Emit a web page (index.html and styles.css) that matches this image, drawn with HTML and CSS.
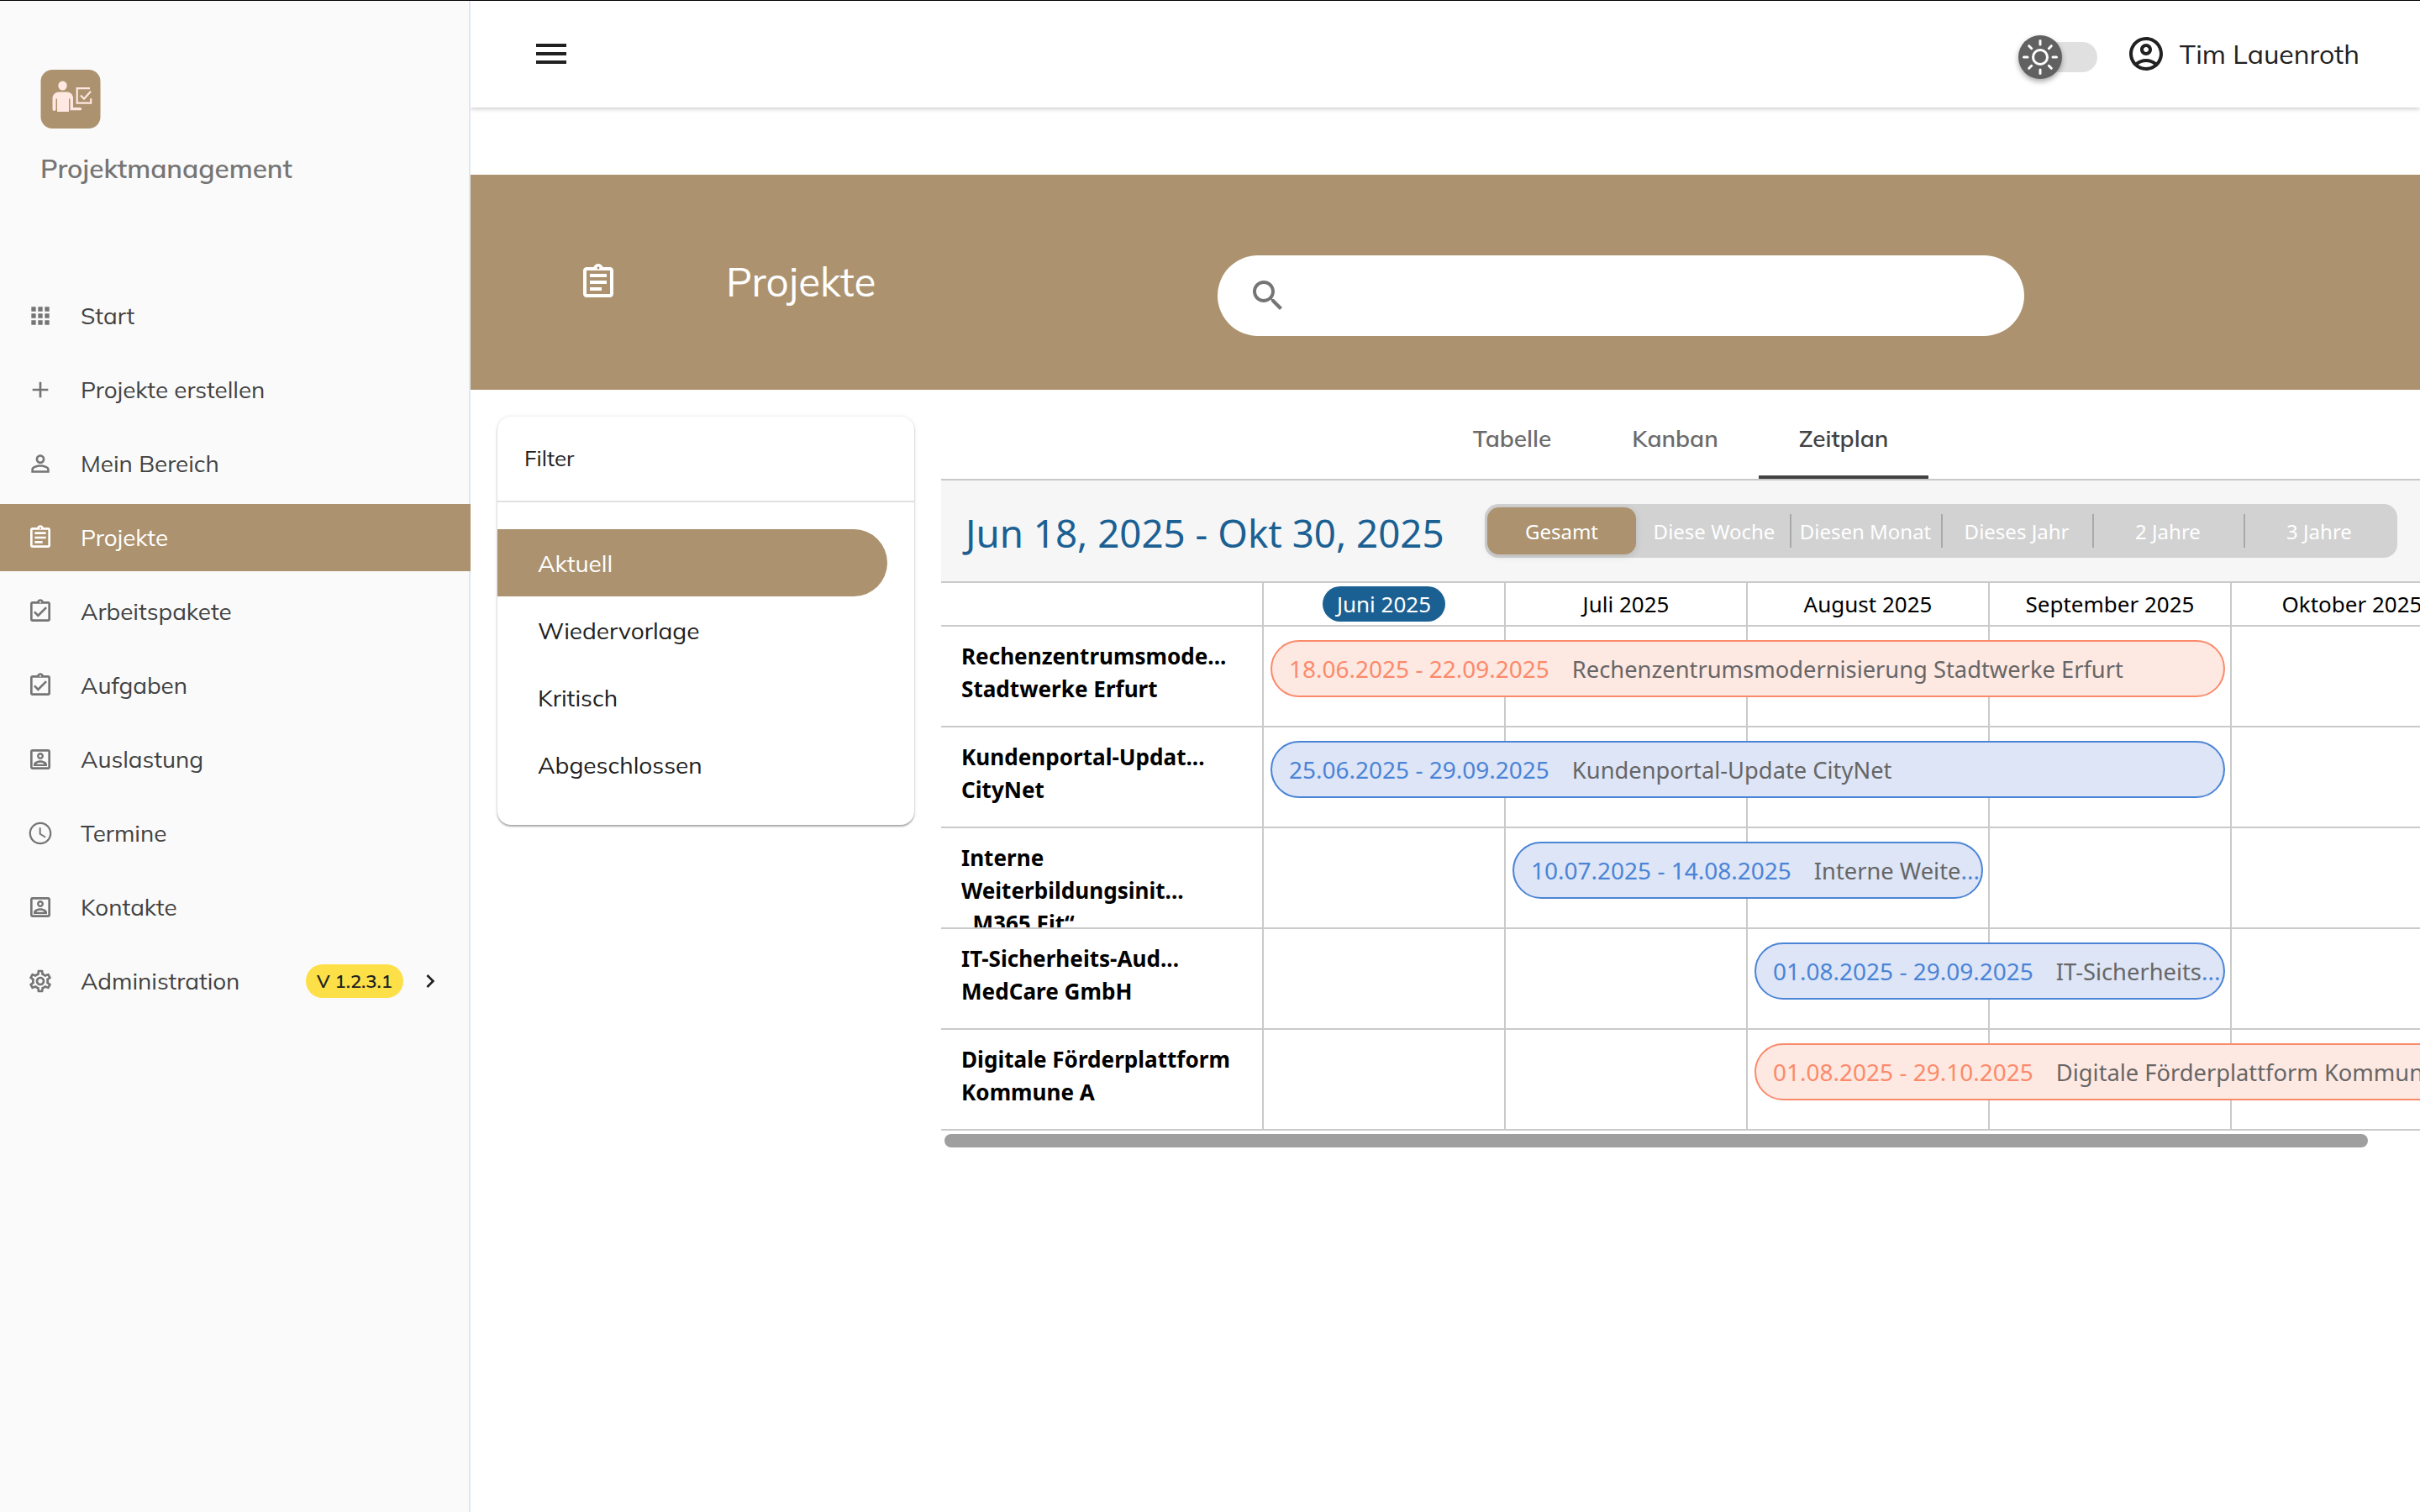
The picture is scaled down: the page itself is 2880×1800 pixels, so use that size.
FILE: index.html
```
<!DOCTYPE html>
<html lang="de">
<head>
  <meta charset="UTF-8">
  <meta name="viewport" content="width=device-width, initial-scale=1.0">
  <title>Projektmanagement</title>
  <link rel="stylesheet" href="styles.css">
</head>
<body>
  <!-- Icons used more than once -->
  <svg class="symbols">
    <symbol id="i-assignment" viewBox="0 0 24 24"><path d="M7 15h7v2H7zm0-4h10v2H7zm0-4h10v2H7zm12-4h-4.180C14.400 1.840 13.300 1 12 1s-2.400.84-2.820 2H5c-1.100 0-2 .9-2 2v14c0 1.100.9 2 2 2h14c1.100 0 2-.9 2-2V5c0-1.100-.9-2-2-2zm-7-.25c.41 0 .75.34.75.75s-.34.75-.75.75-.75-.34-.75-.75.34-.75.75-.75zM19 19H5V5h14v14z"/></symbol>
    <symbol id="i-turned-in" viewBox="0 0 24 24"><path d="M18 9l-1.400-1.400-6.600 6.600-2.600-2.600L6 13l4 4zm1-6h-4.180C14.400 1.840 13.300 1 12 1s-2.400.84-2.820 2H5c-1.100 0-2 .9-2 2v14c0 1.100.9 2 2 2h14c1.100 0 2-.9 2-2V5c0-1.100-.9-2-2-2zm-7-.25c.41 0 .75.34.75.75s-.34.75-.75.75-.75-.34-.75-.75.34-.75.75-.75zM19 19H5V5h14v14z"/></symbol>
    <symbol id="i-portrait" viewBox="0 0 24 24"><path fill-rule="evenodd" d="M19 3H5c-1.110 0-2 .9-2 2v14c0 1.100.89 2 2 2h14c1.100 0 2-.9 2-2V5c0-1.100-.9-2-2-2zm0 16H5V5h14v14zM12 12c1.650 0 3-1.350 3-3s-1.350-3-3-3-3 1.350-3 3 1.350 3 3 3zm0-4.200c.66 0 1.200.54 1.200 1.200s-.54 1.200-1.200 1.200-1.200-.54-1.200-1.200.54-1.200 1.200-1.200zM18 16.600c0-2.500-3.970-3.600-6-3.600s-6 1.100-6 3.600V18h12v-1.400zm-9.700-.2c.7-.9 2.300-1.500 3.700-1.500s3 .6 3.700 1.500H8.300z"/></symbol>
  </svg>

  <aside class="sidebar">
    <div class="brand">
      <svg class="brand-logo" viewBox="0 0 71 70">
        <rect width="71" height="70" rx="14" fill="#ac926e"/>
        <g fill="#ffe8e2">
          <ellipse cx="26" cy="19" rx="5.200" ry="5.500"/>
          <path d="M22 26.500h9c4.500 0 7.500 3 7.500 7.500v11h8.500a1.600 1.600 0 0 1 0 3.300H35V34.500h-1.500V50H19.500V34.500h-1.500V47a2 2 0 0 1-4 0V34c0-4.500 3.500-7.500 8-7.500z"/>
        </g>
        <path d="M58.500 22.200H43.200v17.500h16.500v-5.500M47.500 30.500l4 4.200 8-9" fill="none" stroke="#ffe8e2" stroke-width="2.200"/>
      </svg>
      <div class="brand-name">Projektmanagement</div>
    </div>

    <nav class="nav">
      <a class="nav-item">
        <svg class="icon" viewBox="0 0 24 24"><path d="M4 8h4V4H4v4zm6 12h4v-4h-4v4zm-6 0h4v-4H4v4zm0-6h4v-4H4v4zm6 0h4v-4h-4v4zm6-10v4h4V4h-4zm-6 4h4V4h-4v4zm6 6h4v-4h-4v4zm0 6h4v-4h-4v4z"/></svg>
        <span>Start</span>
      </a>
      <a class="nav-item">
        <svg class="icon" viewBox="0 0 24 24"><path d="M19 13h-6v6h-2v-6H5v-2h6V5h2v6h6v2z"/></svg>
        <span>Projekte erstellen</span>
      </a>
      <a class="nav-item">
        <svg class="icon" viewBox="0 0 24 24"><path d="M12 5.900c1.160 0 2.100.94 2.100 2.100s-.94 2.100-2.100 2.100S9.900 9.160 9.900 8s.94-2.100 2.100-2.100m0 9c2.970 0 6.100 1.460 6.100 2.100v1.100H5.900V17c0-.64 3.130-2.100 6.100-2.100M12 4C9.790 4 8 5.790 8 8s1.790 4 4 4 4-1.790 4-4-1.790-4-4-4zm0 9c-2.670 0-8 1.340-8 4v3h16v-3c0-2.660-5.330-4-8-4z"/></svg>
        <span>Mein Bereich</span>
      </a>
      <a class="nav-item active">
        <svg class="icon"><use href="#i-assignment"/></svg>
        <span>Projekte</span>
      </a>
      <a class="nav-item">
        <svg class="icon"><use href="#i-turned-in"/></svg>
        <span>Arbeitspakete</span>
      </a>
      <a class="nav-item">
        <svg class="icon"><use href="#i-turned-in"/></svg>
        <span>Aufgaben</span>
      </a>
      <a class="nav-item">
        <svg class="icon"><use href="#i-portrait"/></svg>
        <span>Auslastung</span>
      </a>
      <a class="nav-item">
        <svg class="icon" viewBox="0 0 24 24"><path d="M11.990 2C6.470 2 2 6.480 2 12s4.470 10 9.990 10C17.520 22 22 17.520 22 12S17.520 2 11.990 2zM12 20.300c-4.600 0-8.300-3.700-8.300-8.300S7.400 3.700 12 3.700s8.300 3.700 8.300 8.300-3.700 8.300-8.300 8.300zM12.500 7H11v6l5.250 3.150.75-1.230-4.500-2.670z"/></svg>
        <span>Termine</span>
      </a>
      <a class="nav-item">
        <svg class="icon"><use href="#i-portrait"/></svg>
        <span>Kontakte</span>
      </a>
      <a class="nav-item">
        <svg class="icon" viewBox="0 0 24 24"><path d="M19.430 12.980c.04-.32.07-.64.07-.98 0-.34-.03-.66-.07-.98l2.110-1.650c.19-.15.24-.42.12-.64l-2-3.460c-.09-.16-.26-.25-.44-.25-.06 0-.12.010-.17.030l-2.490 1c-.52-.4-1.080-.73-1.690-.98l-.38-2.650C14.460 2.180 14.250 2 14 2h-4c-.25 0-.46.18-.49.42l-.38 2.650c-.61.25-1.170.59-1.690.98l-2.490-1c-.06-.02-.12-.03-.18-.03-.17 0-.34.09-.43.25l-2 3.460c-.13.22-.07.49.12.64l2.110 1.650c-.04.32-.07.65-.07.98 0 .33.03.66.07.98l-2.110 1.650c-.19.15-.24.42-.12.64l2 3.460c.09.16.26.25.44.25.06 0 .12-.01.17-.03l2.490-1c.52.4 1.080.73 1.690.98l.38 2.650c.03.24.24.42.49.42h4c.25 0 .46-.18.49-.42l.38-2.650c.61-.25 1.170-.59 1.690-.98l2.490 1c.06.02.12.03.18.03.17 0 .34-.09.43-.25l2-3.460c.12-.22.07-.49-.12-.64l-2.110-1.650zm-1.980-1.710c.04.31.05.52.05.73 0 .21-.02.43-.05.73l-.14 1.130.89.7 1.080.84-.7 1.210-1.270-.51-1.040-.42-.9.68c-.43.32-.84.56-1.250.73l-1.060.43-.16 1.130-.2 1.350h-1.400l-.19-1.350-.16-1.130-1.060-.43c-.43-.18-.83-.41-1.230-.71l-.91-.7-1.060.43-1.270.51-.7-1.210 1.080-.84.89-.7-.14-1.130c-.03-.31-.05-.54-.05-.74s.02-.43.05-.73l.14-1.130-.89-.7-1.080-.84.7-1.210 1.270.51 1.040.42.9-.68c.43-.32.84-.56 1.250-.73l1.060-.43.16-1.130.2-1.350h1.390l.19 1.350.16 1.130 1.060.43c.43.18.83.41 1.230.71l.91.7 1.060-.43 1.270-.51.7 1.210-1.070.85-.89.7.14 1.130zM12 8c-2.210 0-4 1.790-4 4s1.790 4 4 4 4-1.790 4-4-1.790-4-4-4zm0 6c-1.100 0-2-.9-2-2s.9-2 2-2 2 .9 2 2-.9 2-2 2z"/></svg>
        <span>Administration</span>
        <span class="version">V 1.2.3.1</span>
        <svg class="chevron" viewBox="0 0 24 24"><path d="M8.590 16.590L13.170 12 8.590 7.410 10 6l6 6-6 6z"/></svg>
      </a>
    </nav>
  </aside>

  <div class="main">
    <header class="toolbar">
      <svg class="icon-lg" viewBox="0 0 24 24"><path d="M3 18h18v-2H3v2zm0-5h18v-2H3v2zm0-7v2h18V6H3z"/></svg>
      <div class="toolbar-right">
        <div class="theme-switch">
          <div class="thumb">
            <svg viewBox="0 0 52 52" fill="none" stroke="#fff" stroke-width="3" stroke-linecap="round">
              <circle cx="26" cy="26" r="8.500"/>
              <path d="M26 6.500v4.500M26 41v4.500M6.500 26H11M41 26h4.500M12.700 12.700l3 3M36.300 36.300l3 3M12.700 39.300l3-3M36.300 15.700l3-3"/>
            </svg>
          </div>
        </div>
        <svg class="icon-lg" viewBox="0 0 24 24"><path d="M12 2C6.480 2 2 6.480 2 12s4.480 10 10 10 10-4.480 10-10S17.520 2 12 2zM7.350 18.500C8.660 17.560 10.260 17 12 17s3.340.56 4.650 1.500C15.340 19.440 13.740 20 12 20s-3.340-.56-4.650-1.500zm10.790-1.380C16.450 15.800 14.320 15 12 15s-4.450.8-6.140 2.120C4.700 15.730 4 13.950 4 12c0-4.420 3.580-8 8-8s8 3.580 8 8c0 1.950-.7 3.730-1.860 5.120zM12 6c-1.930 0-3.500 1.570-3.500 3.500S10.070 13 12 13s3.500-1.570 3.500-3.500S13.930 6 12 6zm0 5c-.83 0-1.500-.67-1.500-1.500S11.170 8 12 8s1.500.67 1.500 1.500S12.830 11 12 11z"/></svg>
        <span class="user">Tim Lauenroth</span>
      </div>
    </header>

    <section class="page-header">
      <svg class="icon-lg"><use href="#i-assignment"/></svg>
      <h1>Projekte</h1>
      <div class="search">
        <svg class="icon-lg" viewBox="0 0 24 24"><path d="M15.500 14h-.79l-.28-.27C15.410 12.590 16 11.110 16 9.500 16 5.910 13.090 3 9.500 3S3 5.910 3 9.500 5.910 16 9.500 16c1.610 0 3.090-.59 4.230-1.570l.27.28v.79l5 4.990L20.490 19l-4.990-5zm-6 0C7.010 14 5 11.990 5 9.500S7.010 5 9.500 5 14 7.010 14 9.500 11.990 14 9.500 14z"/></svg>
      </div>
    </section>

    <div class="content">
      <div class="filter">
        <div class="filter-title">Filter</div>
        <ul>
          <li class="active">Aktuell</li>
          <li>Wiedervorlage</li>
          <li>Kritisch</li>
          <li>Abgeschlossen</li>
        </ul>
      </div>

      <div class="panel">
        <div class="tabs">
          <div class="tab">Tabelle</div>
          <div class="tab">Kanban</div>
          <div class="tab active">Zeitplan</div>
        </div>

        <div class="range-bar">
          <div class="range">Jun 18, 2025 - Okt 30, 2025</div>
          <div class="segments">
            <div class="segment active">Gesamt</div>
            <div class="segment">Diese Woche</div>
            <div class="segment">Diesen Monat</div>
            <div class="segment">Dieses Jahr</div>
            <div class="segment">2 Jahre</div>
            <div class="segment">3 Jahre</div>
          </div>
        </div>

        <div class="timeline">
          <div class="row months">
            <div class="cell"></div>
            <div class="cell"><span class="current">Juni 2025</span></div>
            <div class="cell">Juli 2025</div>
            <div class="cell">August 2025</div>
            <div class="cell">September 2025</div>
            <div class="cell">Oktober 2025</div>
          </div>
          <div class="row">
            <div class="cell label">Rechenzentrumsmode...<br>Stadtwerke Erfurt</div>
            <div class="cell"></div><div class="cell"></div><div class="cell"></div><div class="cell"></div><div class="cell"></div>
            <div class="bar red from-jun span-4">18.06.2025 - 22.09.2025<span>Rechenzentrumsmodernisierung Stadtwerke Erfurt</span></div>
          </div>
          <div class="row">
            <div class="cell label">Kundenportal-Updat...<br>CityNet</div>
            <div class="cell"></div><div class="cell"></div><div class="cell"></div><div class="cell"></div><div class="cell"></div>
            <div class="bar blue from-jun span-4">25.06.2025 - 29.09.2025<span>Kundenportal-Update CityNet</span></div>
          </div>
          <div class="row">
            <div class="cell label">Interne<br>Weiterbildungsinit...<br>„M365 Fit“</div>
            <div class="cell"></div><div class="cell"></div><div class="cell"></div><div class="cell"></div><div class="cell"></div>
            <div class="bar blue from-jul span-2">10.07.2025 - 14.08.2025<span>Interne Weite</span>...</div>
          </div>
          <div class="row">
            <div class="cell label">IT-Sicherheits-Aud...<br>MedCare GmbH</div>
            <div class="cell"></div><div class="cell"></div><div class="cell"></div><div class="cell"></div><div class="cell"></div>
            <div class="bar blue from-aug span-2">01.08.2025 - 29.09.2025<span>IT-Sicherheits</span>...</div>
          </div>
          <div class="row">
            <div class="cell label">Digitale Förderplattform<br>Kommune A</div>
            <div class="cell"></div><div class="cell"></div><div class="cell"></div><div class="cell"></div><div class="cell"></div>
            <div class="bar red from-aug span-3">01.08.2025 - 29.10.2025<span>Digitale Förderplattform Kommune A</span></div>
          </div>
        </div>
        <div class="scrollbar"></div>
      </div>
    </div>
  </div>
</body>
</html>
```
FILE: styles.css
```
* {
  box-sizing: border-box;
}

body {
  margin: 0;
  display: flex;
  width: 2880px;
  height: 1800px;
  overflow: hidden;
  background-color: #fff;
  color: #212121;
  font-family: Mulish, "Open Sans", sans-serif;
  font-size: 28px;
}

/* thin window edge over everything */
body::before {
  content: "";
  position: absolute;
  top: 0;
  left: 0;
  width: 100%;
  height: 1px;
  background-color: #000;
  z-index: 10;
}

.symbols {
  display: none;
}

svg {
  flex-shrink: 0;
  fill: currentColor;
}

.icon {
  width: 32px;
  height: 32px;
  color: #757575;
}

.icon-lg {
  width: 48px;
  height: 48px;
}

/* Sidebar */
.sidebar {
  position: relative;
  z-index: 1;
  width: 560px;
  flex-shrink: 0;
  background-color: #fafafa;
  background-image: linear-gradient(#e0e6f3, #e0e6f3);
  background-size: 2px 100%;
  background-position: right;
  background-repeat: no-repeat;
}

.brand {
  height: 336px;
  padding: 83px 0 0 48px;
}

.brand-logo {
  display: block;
  width: 72px;
  height: 70px;
}

.brand-name {
  margin-top: 27px;
  line-height: 40px;
  font-size: 31.500px;
  font-weight: 600;
  color: #757575;
}

.nav {
  display: flex;
  flex-direction: column;
  gap: 8px;
}

.nav-item {
  display: flex;
  align-items: center;
  height: 80px;
  padding: 0 32px;
  gap: 32px;
  color: #424242;
}

.nav-item span {
  padding-bottom: 2px;
  font-size: 27.800px;
  font-weight: 450;
}

.nav-item.active {
  background-color: #ac926e;
}

.nav-item.active .icon,
.nav-item.active span {
  color: #fff;
}

.nav-item .version {
  margin-left: auto;
  padding: 0;
  width: 116px;
  height: 40px;
  line-height: 40px;
  border-radius: 20px;
  background-color: #fddf47;
  color: #212121;
  font-size: 22px;
  font-weight: 600;
  text-align: center;
}

.chevron {
  width: 32px;
  height: 32px;
  margin-left: -16px;
  color: #212121;
}

/* Toolbar */
.main {
  width: 2320px;
}

.toolbar {
  display: flex;
  justify-content: space-between;
  align-items: center;
  height: 128px;
  padding: 0 72px;
  box-shadow: 0 1px 6px rgba(0, 0, 0, 0.25);
}

.toolbar-right {
  display: flex;
  align-items: center;
}

.theme-switch {
  width: 72px;
  height: 36px;
  margin: 8px 34px 0 0;
  border-radius: 18px;
  background-color: #e0e0e0;
}

.thumb {
  width: 52px;
  height: 52px;
  margin: -8px 0 0 -22px;
  border-radius: 50%;
  background-color: #616161;
  box-shadow: 0 3px 6px rgba(0, 0, 0, 0.35);
}

.thumb svg {
  display: block;
  fill: none;
}

.user {
  margin-left: 16px;
  font-size: 32px;
  font-weight: 450;
}

/* Page header */
.page-header {
  display: flex;
  height: 256px;
  margin-top: 80px;
  padding: 104px 128px 0;
  background-color: #ac926e;
  color: #fff;
}

.page-header h1 {
  width: 585px;
  margin: -1px 0 0 128px;
  font-size: 47.700px;
  font-weight: 450;
  line-height: 48px;
}

.search {
  display: flex;
  align-items: center;
  width: 960px;
  height: 96px;
  margin-top: -8px;
  padding: 0 36px;
  border-radius: 48px;
  background-color: #fff;
  color: #757575;
}

/* Filter card */
.content {
  display: flex;
  align-items: flex-start;
}

.filter {
  width: 496px;
  height: 486px;
  margin: 32px 32px 0;
  border-radius: 16px;
  box-shadow: 0 2px 2px rgba(0, 0, 0, 0.3), 0 0 4px rgba(0, 0, 0, 0.12);
}

.filter-title {
  height: 102px;
  padding-left: 32px;
  border-bottom: 2px solid #e0e0e0;
  line-height: 100px;
  font-size: 26px;
  font-weight: 450;
}

.filter ul {
  margin: 0;
  padding: 32px 32px 0 0;
  list-style: none;
}

.filter li {
  height: 80px;
  padding-left: 48px;
  line-height: 82px;
  font-weight: 450;
}

.filter li.active {
  border-radius: 0 40px 40px 0;
  background-color: #ac926e;
  color: #fff;
}

/* Tabs */
.panel {
  width: 1760px;
  overflow: hidden;
  font-family: "Noto Sans", sans-serif;
}

.tabs {
  display: flex;
  justify-content: center;
  height: 108px;
  padding-top: 10px;
  border-bottom: 2px solid #c8c8c8;
  font-family: Mulish, "Open Sans", sans-serif;
}

.tab {
  height: 96px;
  padding: 0 48px;
  line-height: 96px;
  font-weight: 600;
  color: #6b6b6b;
}

.tab.active {
  border-bottom: 4px solid #424242;
  color: #424242;
}

/* Range selection */
.range-bar {
  display: flex;
  align-items: center;
  justify-content: space-between;
  height: 120px;
  padding: 0 27px 0 29px;
  background-color: #f6f6f6;
}

.range {
  padding-top: 4px;
  font-size: 45.700px;
  color: #1b6093;
}

.segments {
  display: flex;
  width: 1086px;
  height: 64px;
  padding: 4px 3px;
  border-radius: 16px;
  background-color: #d2d2d2;
}

.segment {
  position: relative;
  width: 180px;
  line-height: 58px;
  font-size: 24px;
  color: #fff;
  text-align: center;
  white-space: nowrap;
}

.segment.active {
  width: 177px;
  margin-right: 3px;
  border-radius: 14px;
  background-color: #ac926e;
  box-shadow: 0 2px 8px rgba(0, 0, 0, 0.12);
}

.segment:nth-child(n + 3)::before {
  content: "";
  position: absolute;
  left: 0;
  top: 8px;
  width: 2px;
  height: 40px;
  background-color: #a9a9a9;
}

/* Timeline */
.timeline {
  border-top: 2px solid #cacaca;
}

.row {
  display: grid;
  grid-template-columns: 384px repeat(5, 288px);
  grid-template-rows: 118px;
  border-bottom: 2px solid #cacaca;
}

.cell {
  grid-row: 1;
  border-right: 2px solid #cacaca;
}

/* fixed columns, the bars share them */
.cell:nth-child(1) { grid-column: 1; }
.cell:nth-child(2) { grid-column: 2; }
.cell:nth-child(3) { grid-column: 3; }
.cell:nth-child(4) { grid-column: 4; }
.cell:nth-child(5) { grid-column: 5; }
.cell:nth-child(6) { grid-column: 6; }

.months {
  grid-template-rows: 50px;
  font-size: 26px;
  line-height: 51px;
  color: #000;
  text-align: center;
}

.current {
  display: inline-block;
  width: 146px;
  height: 42px;
  line-height: 42px;
  border-radius: 21px;
  background-color: #1b6093;
  color: #fff;
}

.label {
  height: 118px;
  padding: 16px 0 0 24px;
  overflow: hidden;
  font-size: 26.100px;
  font-weight: 700;
  line-height: 39px;
  color: #000;
}

.bar {
  grid-row: 1;
  height: 68px;
  margin: 16px 8px 0;
  padding-left: 20px;
  border: 2px solid;
  border-radius: 34px;
  line-height: 64px;
  font-size: 28px;
  white-space: nowrap;
}

.bar span {
  margin-left: 27px;
  font-size: 27.300px;
  color: #666;
}

.from-jun { grid-column-start: 2; }
.from-jul { grid-column-start: 3; }
.from-aug { grid-column-start: 4; }
.span-2 { grid-column-end: span 2; }
.span-3 { grid-column-end: span 3; }
.span-4 { grid-column-end: span 4; }

.red {
  border-color: #fb8a6b;
  background-color: #fee8e2;
  color: #fb8a6b;
}

.blue {
  border-color: #4a84d6;
  background-color: #dde5f6;
  color: #4a84d6;
}

.scrollbar {
  width: 1694px;
  height: 16px;
  margin: 4px 0 0 4px;
  border-radius: 8px;
  background-color: #9f9f9f;
}
```
